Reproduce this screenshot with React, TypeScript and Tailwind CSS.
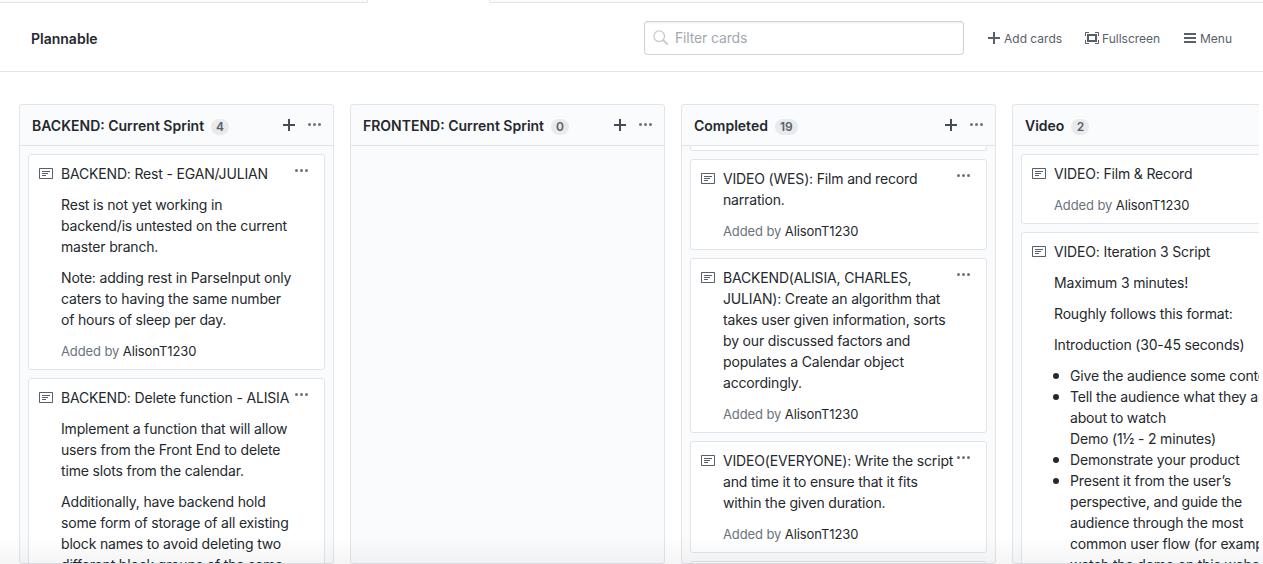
import type { ReactNode } from "react";

function Icon({ w, d, className = "" }: { w: number; d: string; className?: string }) {
  return (
    <svg width={w} height={16} viewBox={`0 0 ${w} 16`} fill="currentColor" className={`shrink-0 ${className}`}>
      <path d={d} />
    </svg>
  );
}

const PLUS = "M12 9H7v5H5V9H0V7h5V2h2v5h5v2z";
const NOTE =
  "M3 10h4V9H3v1zm0-2h6V7H3v1zm0-2h8V5H3v1zm10 6H1V3h12v9zM1 2c-.55 0-1 .45-1 1v9c0 .55.45 1 1 1h12c.55 0 1-.45 1-1V3c0-.55-.45-1-1-1H1z";
const DOTS =
  "M1.5 6a1.5 1.5 0 100 3 1.5 1.5 0 000-3zm5 0a1.5 1.5 0 100 3 1.5 1.5 0 000-3zm5 0a1.5 1.5 0 100 3 1.5 1.5 0 000-3z";
const SCREEN =
  "M13 10h1v3c0 .547-.453 1-1 1h-3v-1h3v-3zM1 10H0v3c0 .547.453 1 1 1h3v-1H1v-3zm0-7h3V2H1c-.547 0-1 .453-1 1v3h1V3zm1 1h10v8H2V4zm2 6h6V6H4v4zm6-8v1h3v3h1V3c0-.547-.453-1-1-1h-3z";
const BARS = "M0 3h12v2H0zM0 7h12v2H0zM0 11h12v2H0z";

function Lines({ lines }: { lines: string[] }) {
  return (
    <p className="whitespace-nowrap">
      {lines.map((l) => (
        <span key={l} className="block">
          {l}
        </span>
      ))}
    </p>
  );
}

function Bullet({ lines }: { lines: string[] }) {
  return (
    <li className="flex gap-[11px]">
      <span className="mt-[8px] -ml-px size-[6px] shrink-0 rounded-full bg-[#24292e]" />
      <Lines lines={lines} />
    </li>
  );
}

function Card({ children, author = true }: { children?: ReactNode; author?: boolean }) {
  return (
    <article className="relative flex shrink-0 rounded-[3px] border border-[#e1e4e8] bg-white pt-2 pb-2 pl-2.5 text-sm leading-[21px] tracking-[-0.17px]">
      <Icon w={14} d={NOTE} className="mt-[3px] text-[#586069]" />
      <div className="ml-2 flex flex-col gap-2.5">
        {children}
        {author && (
          <p className="-mb-px pt-px text-[13px] leading-[21px] tracking-[-0.1px] whitespace-nowrap text-[#6a737d]">
            Added by <span className="text-[#24292e]">AlisonT1230</span>
          </p>
        )}
      </div>
      <svg width="13" height="16" viewBox="0 0 13 16" fill="currentColor" className="absolute top-2 right-[16px] text-[#6a737d]">
        <path d={DOTS} />
      </svg>
    </article>
  );
}

function Column({ title, count, children }: { title: string; count: number; children?: ReactNode }) {
  return (
    <section className="flex h-[460px] w-[315px] shrink-0 flex-col overflow-hidden rounded-[3px] border border-[#e1e4e8] bg-[#fafbfc]">
      <header className="flex h-[41px] shrink-0 items-center border-b border-[#e1e4e8] pl-3">
        <h2 className="pt-0.5 text-sm font-semibold whitespace-nowrap">{title}</h2>
        <span className="mt-[3px] ml-[7px] flex h-4 min-w-[18px] items-center justify-center rounded-full bg-[#e8eaed] px-[5px] text-xs font-semibold text-[#586069]">
          {count}
        </span>
        <span className="mr-3 ml-auto flex items-center gap-[13px] text-[#444d56]">
          <Icon w={12} d={PLUS} />
          <Icon w={13} d={DOTS} className="text-[#6a737d]" />
        </span>
      </header>
      <div className="flex min-h-0 grow flex-col gap-2 overflow-hidden p-2">{children}</div>
    </section>
  );
}

export default function App() {
  return (
    <div className="relative flex h-[564px] w-[1263px] flex-col overflow-hidden bg-white font-['Inter','Liberation_Sans',sans-serif] text-[#24292e]">
      <div className="flex h-[3px] shrink-0">
        <div className="w-[368px] rounded-br-[2px] border-r border-b border-[#e1e4e8] bg-[#fafbfc]" />
        <div className="w-[121px]" />
        <div className="grow rounded-bl-[2px] border-b border-l border-[#e1e4e8] bg-[#fafbfc]" />
      </div>
      <header className="flex h-[69px] shrink-0 items-center border-b border-[#e1e4e8] pt-px pl-[31px]">
        <h1 className="pt-0.5 text-sm font-semibold">Plannable</h1>
        <div className="mr-6 ml-auto flex h-[34px] w-[320px] items-center rounded-[3px] border border-[#d1d5da] pl-2 shadow-[inset_0_1px_2px_rgba(27,31,35,0.075)]">
          <svg width="16" height="16" viewBox="0 0 16 16" fill="none" stroke="#c6cbd1" strokeWidth="1.3">
            <circle cx="6.2" cy="6.2" r="5.3" />
            <path d="M10 10l4.8 4.6" strokeWidth="2" />
          </svg>
          <span className="ml-1.5 text-sm tracking-[-0.15px] text-[#a3a8ae]">Filter cards</span>
        </div>
        <nav className="flex w-[275px] pt-0.5 text-xs whitespace-nowrap text-[#586069]">
          <span className="flex w-[97px] items-center gap-1">
            <Icon w={12} d={PLUS} className="-mt-0.5" />
            Add cards
          </span>
          <span className="flex w-[99px] items-center gap-[3px]">
            <Icon w={14} d={SCREEN} className="-mt-0.5" />
            Fullscreen
          </span>
          <span className="flex items-center gap-1">
            <Icon w={12} d={BARS} className="-mt-0.5" />
            Menu
          </span>
        </nav>
      </header>
      <main className="mr-1 flex gap-4 overflow-hidden pt-8 pl-[19px]">
        <Column title="BACKEND: Current Sprint" count={4}>
          <Card>
            <Lines lines={["BACKEND: Rest - EGAN/JULIAN"]} />
            <Lines lines={["Rest is not yet working in", "backend/is untested on the current", "master branch."]} />
            <Lines lines={["Note: adding rest in ParseInput only", "caters to having the same number", "of hours of sleep per day."]} />
          </Card>
          <Card>
            <Lines lines={["BACKEND: Delete function - ALISIA"]} />
            <Lines lines={["Implement a function that will allow", "users from the Front End to delete", "time slots from the calendar."]} />
            <Lines
              lines={[
                "Additionally, have backend hold",
                "some form of storage of all existing",
                "block names to avoid deleting two",
                "different block groups of the same",
              ]}
            />
          </Card>
        </Column>
        <Column title="FRONTEND: Current Sprint" count={0} />
        <Column title="Completed" count={19}>
          <div className="-mt-2 h-[5px] shrink-0 rounded-b-[3px] border border-t-0 border-[#e1e4e8] bg-white" />
          <Card>
            <Lines lines={["VIDEO (WES): Film and record", "narration."]} />
          </Card>
          <Card>
            <Lines
              lines={[
                "BACKEND(ALISIA, CHARLES,",
                "JULIAN): Create an algorithm that",
                "takes user given information, sorts",
                "by our discussed factors and",
                "populates a Calendar object",
                "accordingly.",
              ]}
            />
          </Card>
          <Card>
            <Lines lines={["VIDEO(EVERYONE): Write the script", "and time it to ensure that it fits", "within the given duration."]} />
          </Card>
          <Card author={false} />
        </Column>
        <Column title="Video" count={2}>
          <Card>
            <Lines lines={["VIDEO: Film & Record"]} />
          </Card>
          <Card author={false}>
            <Lines lines={["VIDEO: Iteration 3 Script"]} />
            <Lines lines={["Maximum 3 minutes!"]} />
            <Lines lines={["Roughly follows this format:"]} />
            <Lines lines={["Introduction (30-45 seconds)"]} />
            <ul>
              <Bullet lines={["Give the audience some context"]} />
              <Bullet lines={["Tell the audience what they are", "about to watch", "Demo (1½ - 2 minutes)"]} />
              <Bullet lines={["Demonstrate your product"]} />
              <Bullet
                lines={[
                  "Present it from the user’s",
                  "perspective, and guide the",
                  "audience through the most",
                  "common user flow (for example,",
                  "watch the demo on this website",
                ]}
              />
            </ul>
          </Card>
        </Column>
      </main>
      <div className="pointer-events-none absolute inset-x-0 bottom-0 h-7 bg-linear-to-b from-transparent to-black/4" />
    </div>
  );
}
